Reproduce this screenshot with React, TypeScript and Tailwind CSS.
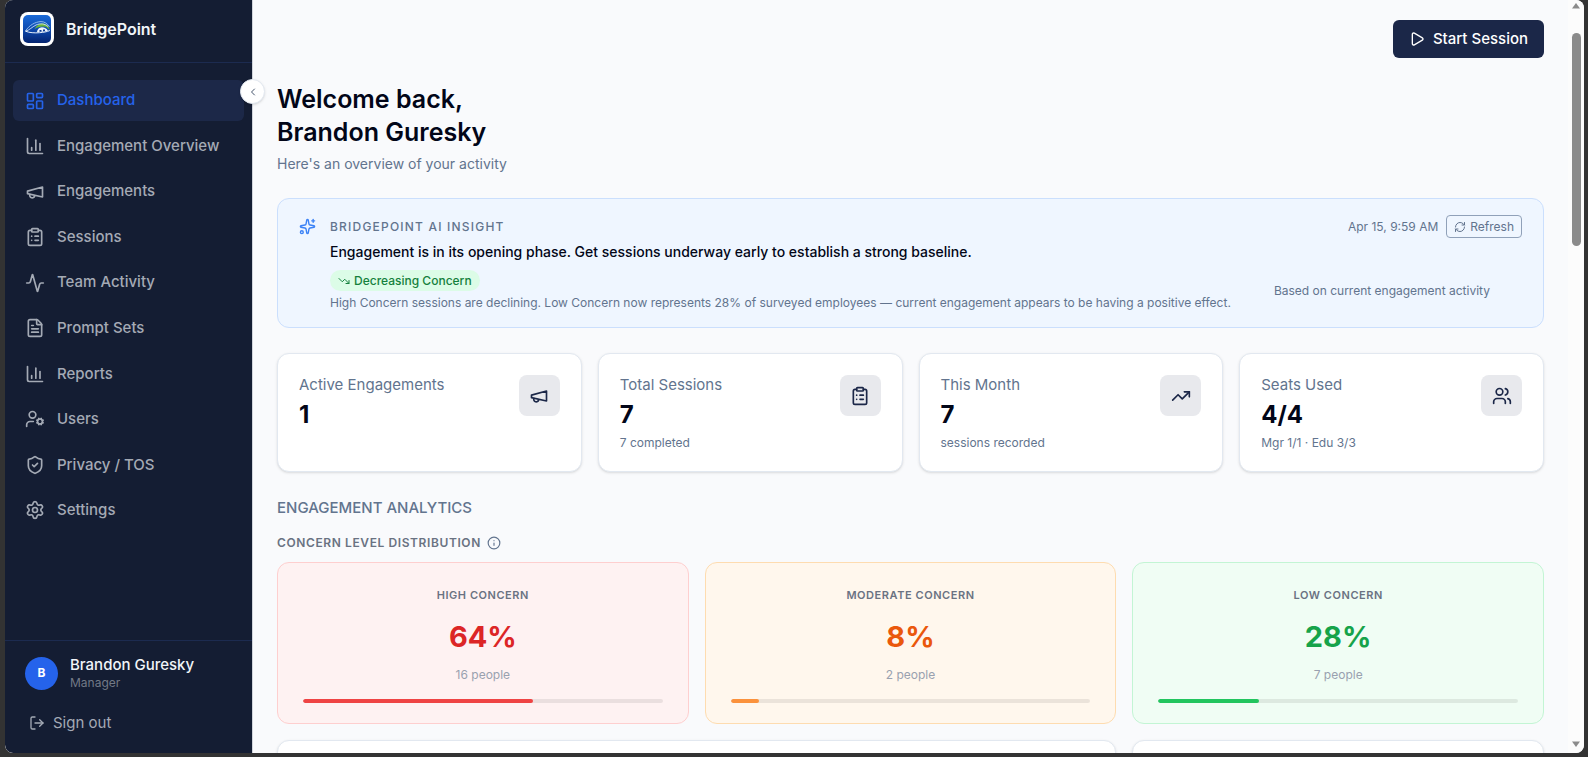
import {
  Activity,
  ChartColumn,
  ChevronLeft,
  ClipboardList,
  FileText,
  Info,
  LayoutDashboard,
  LogOut,
  Play,
  RefreshCw,
  Settings,
  ShieldCheck,
  Sparkles,
  TrendingDown,
  TrendingUp,
  UserCog,
  Users,
} from 'lucide-react';
import type { ComponentType } from 'react';

interface IconProps {
  className?: string;
  strokeWidth?: number;
}

interface NavItem {
  label: string;
  icon: ComponentType<IconProps>;
  active?: boolean;
}

interface Stat {
  label: string;
  value: string;
  note?: string;
  icon: ComponentType<IconProps>;
}

interface ConcernLevel {
  label: string;
  percent: number;
  people: number;
  card: string;
  text: string;
  bar: string;
}

// Slim horn, without the bell flare of the current lucide megaphone.
function Megaphone({ className, strokeWidth = 2 }: IconProps) {
  return (
    <svg
      viewBox="0 0 24 24"
      fill="none"
      stroke="currentColor"
      strokeWidth={strokeWidth}
      strokeLinecap="round"
      strokeLinejoin="round"
      className={className}
      aria-hidden="true"
    >
      <path d="m3 11 18-5v12L3 14v-3z" />
      <path d="M11.6 16.8a3 3 0 1 1-5.8-1.6" />
    </svg>
  );
}

const NAV_ITEMS: NavItem[] = [
  { label: 'Dashboard', icon: LayoutDashboard, active: true },
  { label: 'Engagement Overview', icon: ChartColumn },
  { label: 'Engagements', icon: Megaphone },
  { label: 'Sessions', icon: ClipboardList },
  { label: 'Team Activity', icon: Activity },
  { label: 'Prompt Sets', icon: FileText },
  { label: 'Reports', icon: ChartColumn },
  { label: 'Users', icon: UserCog },
  { label: 'Privacy / TOS', icon: ShieldCheck },
  { label: 'Settings', icon: Settings },
];

const STATS: Stat[] = [
  { label: 'Active Engagements', value: '1', icon: Megaphone },
  { label: 'Total Sessions', value: '7', note: '7 completed', icon: ClipboardList },
  { label: 'This Month', value: '7', note: 'sessions recorded', icon: TrendingUp },
  { label: 'Seats Used', value: '4/4', note: 'Mgr 1/1 · Edu 3/3', icon: Users },
];

const LEVELS: ConcernLevel[] = [
  { label: 'High Concern', percent: 64, people: 16, card: 'bg-[#fef2f2] border-[#fecfcf]', text: 'text-[#dc2626]', bar: 'bg-[#ef4444]' },
  { label: 'Moderate Concern', percent: 8, people: 2, card: 'bg-[#fff7ed] border-[#fedcb0]', text: 'text-[#ea580c]', bar: 'bg-[#fb923c]' },
  { label: 'Low Concern', percent: 28, people: 7, card: 'bg-[#f0fdf4] border-[#c3f5d4]', text: 'text-[#16a34a]', bar: 'bg-[#22c55e]' },
];

function Logo() {
  return (
    <svg viewBox="0 0 34 34" className="size-[34px] shrink-0" aria-hidden="true">
      <defs>
        <linearGradient id="logo-bg" x1="0" y1="0" x2="0" y2="1">
          <stop offset="0" stopColor="#1a6ad8" />
          <stop offset="0.5" stopColor="#0d4ab0" />
          <stop offset="1" stopColor="#04236f" />
        </linearGradient>
      </defs>
      <rect width="34" height="34" rx="8" fill="#fff" />
      <rect x="3" y="3" width="28" height="28" rx="5" fill="url(#logo-bg)" />
      <path d="M14.500 17C16.500 13 20 11 23.500 11.500c3.200.5 5.500 3 6.300 6.500-2-2-3.500-3.300-6-3.500-3.300-.3-6.300.7-9.300 2.500z" fill="#6bb53a" />
      <path d="M17 20c.2-2.800 2-4.600 4.800-4.800 2.800 0 5 1.300 6.200 3.600-3.500 1-7 1.400-11 1.200z" fill="#eef5fd" />
      <path d="M19.500 19.800v-1.800h2v1.700zM23 19.600v-2h2v1.700z" fill="#0b3b94" />
      <path d="M5.500 19C9 13.500 15 9.800 21 9.600c3.500 0 6.500 2 8.500 5.400" fill="none" stroke="#9cc4f2" strokeWidth="0.900" />
      <path d="M5.500 19.200c4-1 6.500-4.200 10.500-6.200 4-1.800 9-1.500 12 1.500" fill="none" stroke="#e8f2fd" strokeWidth="0.800" />
      <path d="M5.500 19.200c4 1.600 9 1.900 14 1.500 4-.3 7.500-.9 10.300-2.200" fill="none" stroke="#e8f2fd" strokeWidth="1" />
    </svg>
  );
}

function Sidebar() {
  return (
    <aside className="relative z-10 flex w-[248px] shrink-0 flex-col rounded-bl-lg border-r border-gray-300 bg-[#141d33]">
      <div className="flex items-center gap-3 border-b border-[#1c2b50] px-[15px] pt-3 pb-4">
        <Logo />
        <span className="text-base font-semibold text-slate-100">BridgePoint</span>
      </div>

      <button
        type="button"
        aria-label="Collapse sidebar"
        className="absolute top-[79px] -right-[13px] flex size-[25px] items-center justify-center rounded-full border border-slate-200 bg-white text-slate-600 shadow-sm"
      >
        <ChevronLeft className="size-3" />
      </button>

      <nav className="flex h-[484px] flex-col justify-between px-2 pt-[17px] pb-4">
        {NAV_ITEMS.map(({ label, icon: Icon, active }) => (
          <a
            key={label}
            href="#"
            className={`flex h-[41px] items-center gap-3 rounded-md px-3 text-[15px] font-medium ${
              active ? 'bg-[#1c2848] text-[#2563eb]' : 'text-[#a4aab5]'
            }`}
          >
            <Icon className="size-5 shrink-0" />
            {label}
          </a>
        ))}
      </nav>

      <div className="mt-auto border-t border-[#1c2b50] px-5 pt-[14px] pb-[14px]">
        <div className="flex items-center gap-3">
          <div className="flex size-[33px] items-center justify-center rounded-full bg-[#2563eb] text-xs font-bold text-white">
            B
          </div>
          <div>
            <p className="text-[15px] leading-5 font-medium text-slate-100">Brandon Guresky</p>
            <p className="text-xs leading-4 text-[#727986]">Manager</p>
          </div>
        </div>
        <button type="button" className="mt-4 flex items-center gap-2 px-1 py-1 text-[15px] leading-6 text-[#a4aab5]">
          <LogOut className="size-4" />
          Sign out
        </button>
      </div>
    </aside>
  );
}

function InsightCard() {
  return (
    <section className="mt-6 flex gap-[14px] rounded-xl border border-[#cbdffd] bg-[#eff6ff] px-[21px] py-4">
      <Sparkles className="mt-[3px] size-[17px] shrink-0 text-[#3b82f6]" />
      <div className="min-w-0 flex-1">
        <div className="flex items-center justify-between">
          <h2 className="text-xs font-medium tracking-widest text-slate-500 uppercase">BridgePoint AI Insight</h2>
          <div className="flex items-center gap-2 text-xs text-slate-500">
            <span>Apr 15, 9:59 AM</span>
            <button
              type="button"
              className="flex items-center gap-1 rounded border border-slate-400 px-[7px] py-[2px] leading-[17px]"
            >
              <RefreshCw className="size-3" />
              Refresh
            </button>
          </div>
        </div>
        <p className="mt-1 text-sm leading-5 font-medium text-slate-950">
          Engagement is in its opening phase. Get sessions underway early to establish a strong baseline.
        </p>
        <div className="mt-2 flex items-center justify-between gap-2 pr-8">
          <div>
            <p className="flex w-fit items-center gap-1 rounded-full bg-[#dcfce7] px-2 py-[2px] text-xs leading-[17px] font-medium text-[#15803d]">
              <TrendingDown className="size-3" />
              Decreasing Concern
            </p>
            <p className="mt-1 text-xs leading-4 text-slate-500">
              High Concern sessions are declining. Low Concern now represents 28% of surveyed employees — current
              engagement appears to be having a positive effect.
            </p>
          </div>
          <p className="shrink-0 text-xs text-slate-500">Based on current engagement activity</p>
        </div>
      </div>
    </section>
  );
}

function StatCard({ label, value, note, icon: Icon }: Stat) {
  return (
    <div className="flex items-start justify-between rounded-xl border border-slate-200 bg-white px-[21px] pt-[21px] pb-5 shadow-sm">
      <div>
        <p className="text-[15px] leading-5 text-slate-500">{label}</p>
        <p className="mt-1 text-2xl leading-8 font-bold text-slate-950">{value}</p>
        {note && <p className="mt-1 text-xs leading-4 text-slate-500">{note}</p>}
      </div>
      <div className="flex size-[41px] items-center justify-center rounded-lg bg-[#e8e9ed] text-[#1b2748]">
        <Icon className="size-5" />
      </div>
    </div>
  );
}

function ConcernCard({ label, percent, people, card, text, bar }: ConcernLevel) {
  return (
    <div className={`rounded-xl border px-[25px] pt-6 pb-5 text-center ${card}`}>
      <p className="text-[11px] leading-4 font-semibold tracking-wider text-gray-500 uppercase">{label}</p>
      <p className={`mt-4 text-[29px] leading-9 font-bold ${text}`}>{percent}%</p>
      <p className="mt-3 text-xs leading-4 text-gray-400">{people} people</p>
      <div className="mt-4 h-1 overflow-hidden rounded-full bg-black/8">
        <div className={`h-full rounded-full ${bar}`} style={{ width: `${percent}%` }} />
      </div>
    </div>
  );
}

function Scrollbar() {
  return (
    <div className="flex w-4 shrink-0 flex-col items-center rounded-r-md bg-[#fcfcfc] py-[3px]" aria-hidden="true">
      <svg viewBox="0 0 8 6" className="h-[6px] w-2" fill="#8b8b8b">
        <path d="M4 0l4 5.500H0z" />
      </svg>
      <div className="mt-6 h-[213px] w-[9px] rounded-full bg-[#8b8b8b]" />
      <svg viewBox="0 0 8 6" className="mt-auto mb-[3px] h-[6px] w-2" fill="#8b8b8b">
        <path d="M4 6l4-5.500H0z" />
      </svg>
    </div>
  );
}

export default function App() {
  return (
    <div className="h-screen bg-[#333] pr-1 pb-1 pl-[5px] font-['Inter',sans-serif]">
      <div className="flex h-full overflow-hidden rounded-lg bg-[#f9fafc]">
        <Sidebar />

        <main className="min-w-0 flex-1 overflow-hidden px-6 pt-5">
          <div className="flex justify-end">
            <button
              type="button"
              className="flex h-[38px] items-center gap-2 rounded-md bg-[#1b2748] px-4 text-[15px] font-medium text-white"
            >
              <Play className="size-4" />
              Start Session
            </button>
          </div>

          <h1 className="mt-[25px] text-[25px] leading-[33px] font-semibold text-slate-950">
            Welcome back,
            <br />
            Brandon Guresky
          </h1>
          <p className="mt-[5px] text-sm leading-5 text-slate-500">Here's an overview of your activity</p>

          <InsightCard />

          <div className="mt-[25px] grid grid-cols-4 gap-4">
            {STATS.map(stat => (
              <StatCard key={stat.label} {...stat} />
            ))}
          </div>

          <h2 className="mt-6 text-[15px] leading-6 font-medium text-slate-500 uppercase">Engagement Analytics</h2>

          <div className="mt-[13px] flex items-center gap-[6px] text-slate-500">
            <h3 className="text-xs leading-5 font-semibold tracking-wider text-gray-500 uppercase">
              Concern Level Distribution
            </h3>
            <Info className="size-[14px]" />
          </div>

          <div className="mt-[9px] grid grid-cols-3 gap-4">
            {LEVELS.map(level => (
              <ConcernCard key={level.label} {...level} />
            ))}
            <div className="col-span-2 h-40 rounded-xl border border-slate-200 bg-white shadow-sm" />
            <div className="h-40 rounded-xl border border-slate-200 bg-white shadow-sm" />
          </div>
        </main>

        <Scrollbar />
      </div>
    </div>
  );
}
